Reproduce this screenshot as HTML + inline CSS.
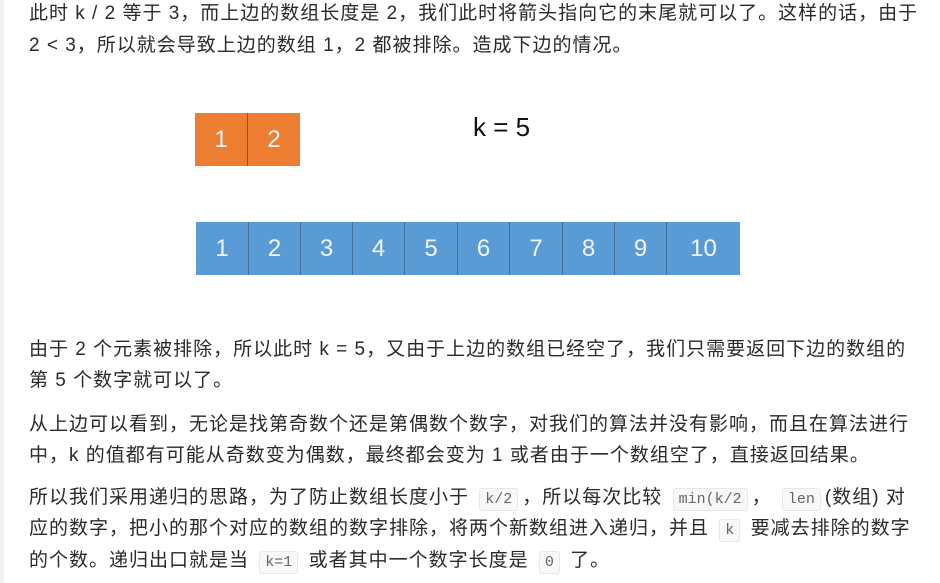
<!DOCTYPE html>
<html><head><meta charset="utf-8"><style>
body{margin:0;width:940px;height:583px;background:#fff;overflow:hidden;position:relative;font-family:"Liberation Sans","Noto Sans CJK SC",sans-serif;color:#2a2a2a;font-size:19px;letter-spacing:1px}
.bar{position:absolute;left:0;top:0;width:4px;height:583px;background:#f0f0f0}
.l{position:absolute;left:29px;white-space:nowrap;line-height:22px}
code{font-family:"Liberation Mono","Noto Sans CJK SC",monospace;font-size:15px;letter-spacing:0;color:#666;background:#f8f8f8;border:1px solid #e8e8e8;border-radius:3px;padding:2px 5px;margin:0 4px}
.c{position:absolute;display:flex;align-items:center;justify-content:center;color:#eef5fb;font-size:24px;letter-spacing:0;box-sizing:border-box;border-right:1px solid #3f6f9c}
.o{background:#ED7D31;border-color:#b55a1e}
.b{background:#5B9BD5}
</style></head><body>
<div class="bar"></div>
<div class="l" style="top:3px">此时 k / 2 等于 3，而上边的数组长度是 2，我们此时将箭头指向它的末尾就可以了。这样的话，由于</div>
<div class="l" style="top:35px">2 &lt; 3，所以就会导致上边的数组 1，2 都被排除。造成下边的情况。</div>

<div style="position:absolute;left:195px;top:113px;width:105px;height:53px;background:#ED7D31;border:1px solid #c8692a;box-sizing:border-box"></div>
<div class="c o" style="left:195px;top:113px;width:53px;height:53px;border-right:1px solid #9c4f1c">1</div>
<div class="c o" style="left:248px;top:113px;width:52px;height:53px;border-right:none">2</div>
<div style="position:absolute;left:473px;top:112px;font-size:26px;letter-spacing:0;color:#111">k = 5</div>

<div style="position:absolute;left:196px;top:222px;width:544px;height:53px;background:#5B9BD5;border:1px solid #3f6f9c;box-sizing:border-box"></div>
<div class="c b" style="left:196px;top:222px;width:53px;height:53px">1</div>
<div class="c b" style="left:249px;top:222px;width:52px;height:53px">2</div>
<div class="c b" style="left:301px;top:222px;width:52px;height:53px">3</div>
<div class="c b" style="left:353px;top:222px;width:52px;height:53px">4</div>
<div class="c b" style="left:405px;top:222px;width:53px;height:53px">5</div>
<div class="c b" style="left:458px;top:222px;width:52px;height:53px">6</div>
<div class="c b" style="left:510px;top:222px;width:53px;height:53px">7</div>
<div class="c b" style="left:563px;top:222px;width:52px;height:53px">8</div>
<div class="c b" style="left:615px;top:222px;width:52px;height:53px">9</div>
<div class="c b" style="left:667px;top:222px;width:73px;height:53px;border-right:none">10</div>

<div class="l" style="top:339px">由于 2 个元素被排除，所以此时 k = 5，又由于上边的数组已经空了，我们只需要返回下边的数组的</div>
<div class="l" style="top:370px">第 5 个数字就可以了。</div>
<div class="l" style="top:414px">从上边可以看到，无论是找第奇数个还是第偶数个数字，对我们的算法并没有影响，而且在算法进行</div>
<div class="l" style="top:445px">中，k 的值都有可能从奇数变为偶数，最终都会变为 1 或者由于一个数组空了，直接返回结果。</div>
<div class="l" style="top:487px">所以我们采用递归的思路，为了防止数组长度小于 <code>k/2</code>，所以每次比较 <code>min(k/2</code>， <code>len</code>(数组) 对</div>
<div class="l" style="top:518px">应的数字，把小的那个对应的数组的数字排除，将两个新数组进入递归，并且 <code>k</code> 要减去排除的数字</div>
<div class="l" style="top:550px">的个数。递归出口就是当 <code>k=1</code> 或者其中一个数字长度是 <code>0</code> 了。</div>
</body></html>
